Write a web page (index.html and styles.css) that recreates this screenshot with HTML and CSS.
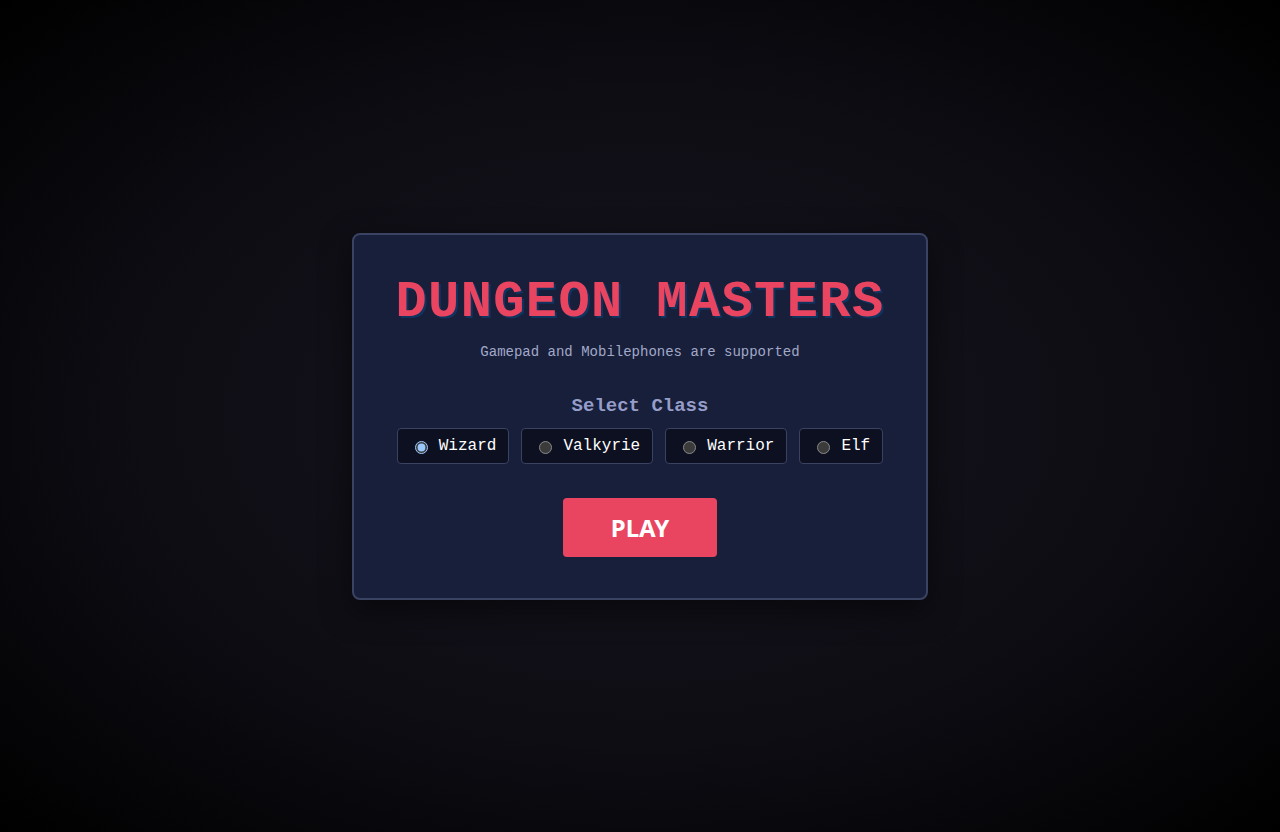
FILE: index.html
```html
<!DOCTYPE html>
<html lang="en">
<head>
<meta charset="utf-8">
<title>Dungeon Masters</title>
<link rel="stylesheet" href="styles.css">
</head>
<body>
<main class="stage">
  <section class="card">
    <h1 class="title">DUNGEON MASTERS</h1>
    <p class="subtitle">Gamepad and Mobilephones are supported</p>
    <h2 class="section-label">Select Class</h2>
    <div class="classes">
      <label class="option"><input type="radio" name="cls" checked><span>Wizard</span></label>
      <label class="option"><input type="radio" name="cls"><span>Valkyrie</span></label>
      <label class="option"><input type="radio" name="cls"><span>Warrior</span></label>
      <label class="option"><input type="radio" name="cls"><span>Elf</span></label>
    </div>
    <button class="play" type="button">PLAY</button>
  </section>
</main>
</body>
</html>
```

FILE: styles.css
```css
html, body {
  margin: 0;
  height: 100%;
}
body {
  background: radial-gradient(ellipse at center, #16141e 0%, #0e0d14 55%, #000 100%);
  font-family: "Liberation Mono", "Courier New", monospace;
  color: #fff;
  color-scheme: dark;
}
.stage {
  height: 100%;
  display: flex;
  align-items: center;
  justify-content: center;
}
.card {
  width: 572px;
  box-sizing: content-box;
  background: #171f3b;
  border: 2px solid #3b4363;
  border-radius: 8px;
  padding: 38px 0 41px;
  display: flex;
  flex-direction: column;
  align-items: center;
  box-shadow: 0 10px 30px rgba(0,0,0,0.5);
}
.title {
  margin: 0;
  font-size: 52px;
  letter-spacing: 1.4px;
  font-weight: 700;
  color: #e94560;
  text-shadow: 2px 2px 0 #0f3460;
  line-height: 60px;
}
.subtitle {
  margin: 11px 0 0;
  font-size: 14px;
  color: #a3a8c8;
}
.section-label {
  margin: 35px 0 0;
  font-size: 19px;
  font-weight: 700;
  color: #959dc8;
}
.classes {
  margin-top: 11px;
  display: flex;
  gap: 12px;
}
.option {
  display: flex;
  align-items: center;
  height: 34px;
  padding: 0 12px;
  background: #0c1020;
  border: 1px solid #3a4262;
  border-radius: 4px;
  font-size: 16px;
  color: #fff;
  cursor: pointer;
}
.option input {
  margin: 3px 11px 0 5px;
}
.play {
  margin-top: 34px;
  width: 154px;
  height: 59px;
  border: none;
  border-radius: 4px;
  background: #e94560;
  color: #fff;
  font-family: "Noto Sans", "Open Sans", sans-serif;
  font-weight: 700;
  font-size: 24px;
  cursor: pointer;
}
```
